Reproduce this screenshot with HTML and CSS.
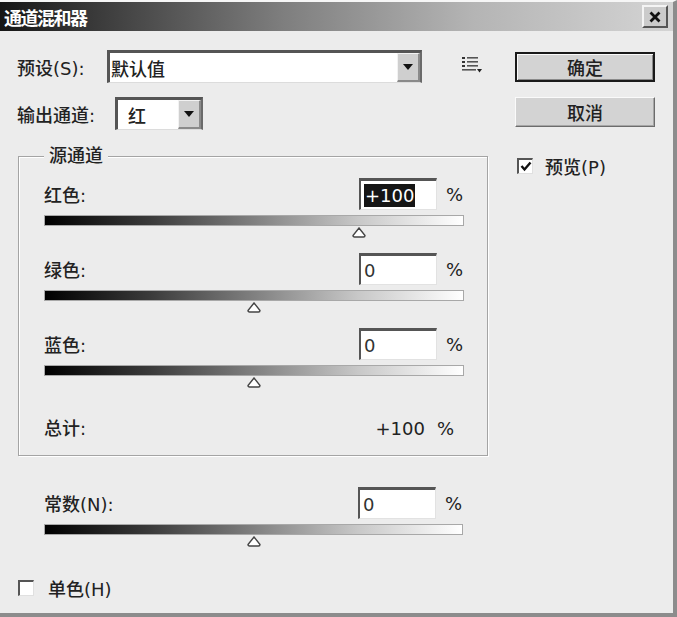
FILE: index.html
```html
<!DOCTYPE html>
<html lang="zh-CN">
<head>
    <meta charset="UTF-8">
    <meta name="viewport" content="width=device-width, initial-scale=1.0">
    <title>通道混和器</title>
    <link rel="stylesheet" href="styles.css">
</head>
<body>
    <div class="dialog">
        <div class="titlebar">
            <span class="title">通道混和器</span>
            <button class="close-btn" type="button">
                <svg width="12" height="12" viewBox="0 0 12 12">
                    <path d="M1.5 1.5 L10.5 10.5 M10.5 1.5 L1.5 10.5" stroke="#111" stroke-width="2.8"/>
                </svg>
            </button>
        </div>

        <div class="content">
            <div class="main">
                <div class="field-row">
                    <label class="field-label preset-label">预设(S):</label>
                    <div class="select preset-select">
                        <span class="select-value">默认值</span>
                        <span class="select-arrow"></span>
                    </div>
                    <svg class="list-icon" width="21" height="18" viewBox="0 0 21 18">
                        <rect x="0" y="1" width="3" height="2" fill="#333"/>
                        <rect x="5" y="1" width="11" height="1.6" fill="#555"/>
                        <rect x="0" y="5" width="3" height="2" fill="#333"/>
                        <rect x="5" y="5" width="11" height="1.6" fill="#555"/>
                        <rect x="0" y="9" width="3" height="2" fill="#333"/>
                        <rect x="5" y="9" width="11" height="1.6" fill="#555"/>
                        <rect x="0" y="13" width="14" height="1.6" fill="#555"/>
                        <path d="M15 13 L20 13 L17.5 16.5 Z" fill="#222"/>
                    </svg>
                </div>

                <div class="field-row output-row">
                    <label class="field-label output-label">输出通道:</label>
                    <div class="select output-select">
                        <span class="select-value output-value">红</span>
                        <span class="select-arrow"></span>
                    </div>
                </div>

                <fieldset class="group">
                    <legend>源通道</legend>

                    <div class="channel">
                        <div class="channel-head">
                            <span class="channel-label">红色:</span>
                            <div class="num-input"><span class="selected">+100</span></div>
                            <span class="pct">%</span>
                        </div>
                        <div class="track"></div>
                        <div class="thumb-row">
                            <svg class="thumb" style="left: 75%" width="15" height="11" viewBox="0 0 15 11">
                                <path d="M7.5 1 L13.5 8.5 Q13.5 10 12 10 L3 10 Q1.5 10 1.5 8.5 Z" fill="#fff" stroke="#444" stroke-width="1.4"/>
                            </svg>
                        </div>
                    </div>

                    <div class="channel">
                        <div class="channel-head">
                            <span class="channel-label">绿色:</span>
                            <div class="num-input">0</div>
                            <span class="pct">%</span>
                        </div>
                        <div class="track"></div>
                        <div class="thumb-row">
                            <svg class="thumb" style="left: 50%" width="15" height="11" viewBox="0 0 15 11">
                                <path d="M7.5 1 L13.5 8.5 Q13.5 10 12 10 L3 10 Q1.5 10 1.5 8.5 Z" fill="#fff" stroke="#444" stroke-width="1.4"/>
                            </svg>
                        </div>
                    </div>

                    <div class="channel">
                        <div class="channel-head">
                            <span class="channel-label">蓝色:</span>
                            <div class="num-input">0</div>
                            <span class="pct">%</span>
                        </div>
                        <div class="track"></div>
                        <div class="thumb-row">
                            <svg class="thumb" style="left: 50%" width="15" height="11" viewBox="0 0 15 11">
                                <path d="M7.5 1 L13.5 8.5 Q13.5 10 12 10 L3 10 Q1.5 10 1.5 8.5 Z" fill="#fff" stroke="#444" stroke-width="1.4"/>
                            </svg>
                        </div>
                    </div>

                    <div class="total-row">
                        <span class="channel-label">总计:</span>
                        <span class="total-value">+100</span>
                        <span class="total-pct">%</span>
                    </div>
                </fieldset>

                <div class="channel constant">
                    <div class="channel-head">
                        <span class="channel-label">常数(N):</span>
                        <div class="num-input">0</div>
                        <span class="pct">%</span>
                    </div>
                    <div class="track"></div>
                    <div class="thumb-row">
                        <svg class="thumb" style="left: 50%" width="15" height="11" viewBox="0 0 15 11">
                            <path d="M7.5 1 L13.5 8.5 Q13.5 10 12 10 L3 10 Q1.5 10 1.5 8.5 Z" fill="#fff" stroke="#444" stroke-width="1.4"/>
                        </svg>
                    </div>
                </div>

                <label class="checkbox mono">
                    <span class="check-box"></span>
                    <span>单色(H)</span>
                </label>
            </div>

            <div class="side">
                <button class="btn btn-default" type="button">确定</button>
                <button class="btn btn-cancel" type="button">取消</button>
                <label class="checkbox preview">
                    <span class="check-box">
                        <svg width="12" height="11" viewBox="0 0 12 11">
                            <path d="M1.5 5 L4.5 8.5 L10.5 1.5" fill="none" stroke="#111" stroke-width="2.4"/>
                        </svg>
                    </span>
                    <span>预览(P)</span>
                </label>
            </div>
        </div>
    </div>
</body>
</html>
```

FILE: styles.css
```css
body {
    margin: 0;
    background: #ececec;
    font-family: "DejaVu Sans", "Noto Sans CJK SC", sans-serif;
    font-size: 18px;
    font-weight: 500;
    color: #222;
}

.dialog {
    width: 677px;
    height: 617px;
    box-sizing: border-box;
    border-top: 2px solid #f6f6f6;
    border-right: 4px solid #8c8c8c;
    border-bottom: 4px solid #8c8c8c;
    background: #ececec;
}

.titlebar {
    height: 29px;
    display: flex;
    align-items: center;
    justify-content: space-between;
    padding: 0 5px 0 4px;
    background: linear-gradient(90deg, #161616 0%, #3c3c3c 15%, #7e7e7e 42%, #b4b4b4 70%, #d4d4d4 100%);
}

.title {
    color: #fff;
    font-family: "Noto Sans CJK SC", sans-serif;
    font-weight: bold;
    font-size: 18px;
    letter-spacing: -1.5px;
}

.close-btn {
    width: 26px;
    height: 23px;
    padding: 0;
    display: flex;
    align-items: center;
    justify-content: center;
    background: #cbcbcb;
    border: 2px solid;
    border-color: #f4f4f4 #555 #555 #f4f4f4;
}

.content {
    display: flex;
    gap: 27px;
    padding: 19px 0 0 17px;
}

.main {
    width: 471px;
}

.field-row {
    display: flex;
    align-items: center;
    height: 33px;
}

.output-row {
    margin-top: 14px;
}

.preset-label {
    width: 90px;
}

.output-label {
    width: 98px;
}

.select {
    height: 33px;
    box-sizing: border-box;
    display: flex;
    align-items: stretch;
    background: #fff;
    border-style: solid;
    border-width: 3px 2px 1px 3px;
    border-color: #555 #6a6a6a #dcdcdc #555;
}

.preset-select {
    width: 315px;
}

.output-select {
    width: 88px;
}

.select-value {
    flex: 1;
    display: flex;
    align-items: center;
    padding-left: 1px;
}

.output-value {
    padding-left: 10px;
}

.select-arrow {
    width: 23px;
    box-sizing: border-box;
    background: #cfcfcf;
    border-style: solid;
    border-width: 1px 2px 2px 1px;
    border-color: #f2f2f2 #8a8a8a #8a8a8a #f2f2f2;
    display: flex;
    align-items: center;
    justify-content: center;
}

.select-arrow::after {
    content: "";
    border-left: 5px solid transparent;
    border-right: 5px solid transparent;
    border-top: 6px solid #111;
}

.list-icon {
    margin-left: 40px;
    margin-top: -4px;
}

.group {
    box-sizing: border-box;
    width: 470px;
    min-width: 0;
    margin: 15px 0 0 1px;
    padding: 11px 23px 15px 25px;
    border: 1px solid #a4a4a4;
    box-shadow: 1px 1px 0 #fff, inset 1px 1px 0 #fff;
}

.group legend {
    padding: 0 5px;
    line-height: 22px;
    background: #ececec;
}

.channel {
    margin-bottom: 15px;
}

.channel-head {
    display: flex;
    align-items: center;
    height: 32px;
}

.channel-label {
    flex: 1;
}

.num-input {
    width: 78px;
    height: 32px;
    box-sizing: border-box;
    display: flex;
    align-items: center;
    padding-left: 3px;
    background: #fff;
    border-style: solid;
    border-width: 3px 1px 1px 2px;
    border-color: #555 #e2e2e2 #e2e2e2 #555;
    color: #333;
}

.selected {
    background: #151515;
    color: #fff;
    padding: 1px 1px;
}

.pct {
    width: 18px;
    margin-left: 9px;
}

.track {
    margin-top: 5px;
    height: 11px;
    box-sizing: border-box;
    border: 1px solid #a8a8a8;
    background: linear-gradient(90deg, #000 0%, #3a3a3a 25%, #808080 50%, #c8c8c8 75%, #fff 100%);
}

.thumb-row {
    position: relative;
    height: 12px;
}

.thumb {
    position: absolute;
    top: 1px;
    transform: translateX(-50%);
}

.total-row {
    display: flex;
    align-items: center;
    margin-top: 30px;
    line-height: 22px;
    padding-right: 10px;
}

.total-pct {
    margin-left: 12px;
}

.constant {
    width: 419px;
    margin: 31px 0 0 27px;
}

.checkbox {
    display: flex;
    align-items: center;
}

.check-box {
    width: 16px;
    height: 16px;
    box-sizing: border-box;
    display: flex;
    align-items: center;
    justify-content: center;
    background: #fff;
    border-style: solid;
    border-width: 2px 1px 1px 2px;
    border-color: #555 #e0e0e0 #e0e0e0 #555;
}

.mono {
    margin: 28px 0 0 1px;
    gap: 14px;
}

.side {
    width: 140px;
    display: flex;
    flex-direction: column;
}

.btn {
    width: 140px;
    height: 30px;
    padding: 0;
    font-family: inherit;
    font-size: 18px;
    font-weight: 500;
    color: #222;
    background: #d3d3d3;
    border: 1px solid;
    border-color: #fafafa #6c6c6c #6c6c6c #fafafa;
    box-shadow: inset -1px -1px 0 #a6a6a6;
}

.btn-default {
    margin-top: 2px;
    border: 2px solid #1a1a1a;
    box-shadow: inset 1px 1px 0 #fafafa, inset -1px -1px 0 #8a8a8a;
}

.btn-cancel {
    margin-top: 15px;
}

.preview {
    margin: 26px 0 0 2px;
    gap: 12px;
}
```
